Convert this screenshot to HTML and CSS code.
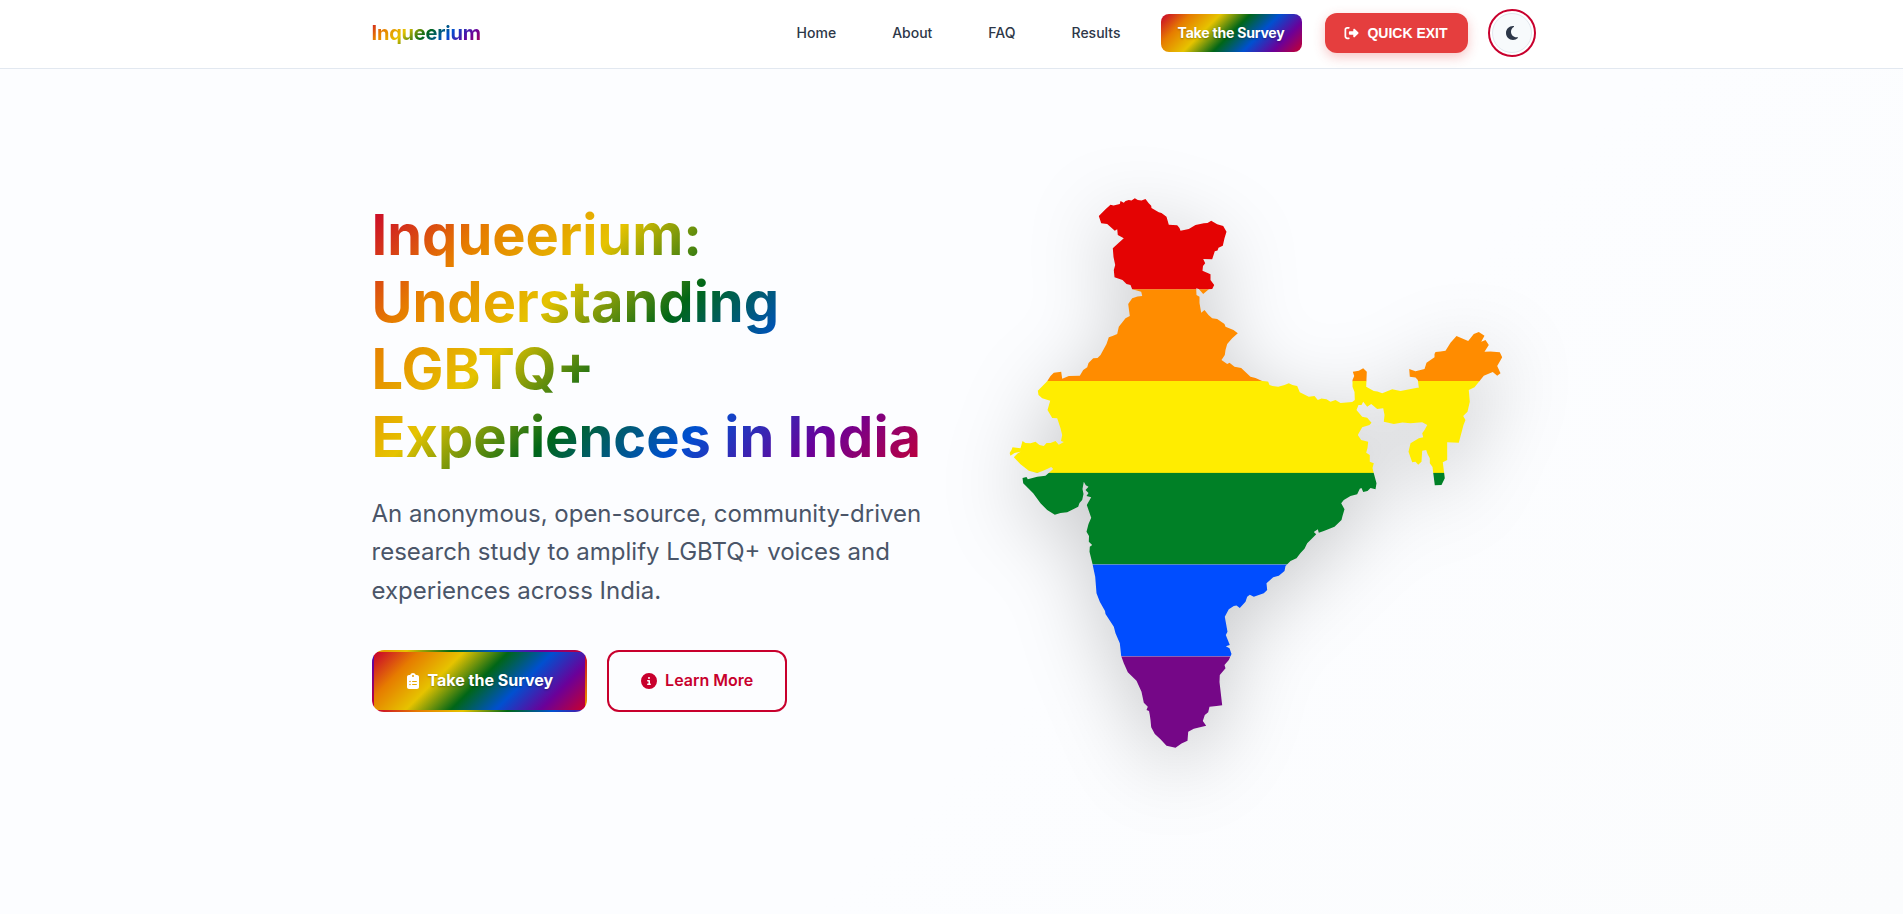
FILE: index.html
```html
<!DOCTYPE html>
<html lang="en">
<head>
<meta charset="utf-8">
<title>Inqueerium</title>
<link rel="stylesheet" href="styles.css">
</head>
<body>
<header class="header">
  <nav class="container nav">
    <a class="brand">Inqueerium</a>
    <div class="menu">
      <a class="link">Home</a>
      <a class="link">About</a>
      <a class="link">FAQ</a>
      <a class="link">Results</a>
      <a class="nav-survey">Take the Survey</a>
      <button class="exit">
        <svg class="exit-icon" viewBox="0 0 512 512"><path d="M377.900 105.900L500.700 228.700c7.200 7.200 11.300 17.100 11.300 27.300s-4.100 20.100-11.300 27.300L377.900 406.100c-6.400 6.400-15 9.900-24 9.900c-18.700 0-33.900-15.200-33.900-33.900l0-62.100-128 0c-17.700 0-32-14.300-32-32l0-64c0-17.700 14.300-32 32-32l128 0 0-62.100c0-18.700 15.200-33.900 33.900-33.900c9 0 17.600 3.600 24 9.900zM160 96L96 96c-17.700 0-32 14.300-32 32l0 256c0 17.700 14.300 32 32 32l64 0c17.700 0 32 14.300 32 32s-14.300 32-32 32l-64 0c-53 0-96-43-96-96L0 128C0 75 43 32 96 32l64 0c17.700 0 32 14.300 32 32s-14.300 32-32 32z"/></svg>
        <span>QUICK EXIT</span>
      </button>
      <button class="theme" aria-label="Toggle theme">
        <svg class="moon" viewBox="0 0 384 512"><path d="M223.500 32C100 32 0 132.300 0 256S100 480 223.500 480c60.600 0 115.500-24.200 155.800-63.400c5-4.900 6.300-12.500 3.100-18.700s-10.100-9.700-17-8.500c-9.800 1.700-19.800 2.600-30.100 2.600c-96.900 0-175.500-78.800-175.500-176c0-65.800 36-123.100 89.300-153.300c6.100-3.500 9.200-10.500 7.700-17.300s-7.300-11.900-14.300-12.500c-6.300-.5-12.600-.8-19-.8z"/></svg>
      </button>
    </div>
  </nav>
</header>
<main class="hero">
  <div class="container grid">
    <section class="copy">
      <h1 class="title">Inqueerium: Understanding LGBTQ+ Experiences in India</h1>
      <p class="lead">An anonymous, open-source, community-driven research study to amplify LGBTQ+ voices and experiences across India.</p>
      <div class="actions">
        <a class="btn btn-primary">
          <svg class="clipboard" viewBox="0 0 384 512"><path fill-rule="evenodd" d="M192 0c-41.800 0-77.400 26.700-90.500 64L64 64C28.700 64 0 92.700 0 128L0 448c0 35.300 28.700 64 64 64l256 0c35.300 0 64-28.700 64-64l0-320c0-35.300-28.700-64-64-64l-37.500 0C269.400 26.700 233.800 0 192 0zm0 64a32 32 0 1 1 0 64 32 32 0 1 1 0-64zM72 272a24 24 0 1 1 48 0 24 24 0 1 1-48 0zm104-16l128 0c8.800 0 16 7.200 16 16s-7.200 16-16 16l-128 0c-8.800 0-16-7.200-16-16s7.200-16 16-16zM72 368a24 24 0 1 1 48 0 24 24 0 1 1-48 0zm88 0c0-8.800 7.200-16 16-16l128 0c8.800 0 16 7.200 16 16s-7.200 16-16 16l-128 0c-8.800 0-16-7.200-16-16z"/></svg>
          <span>Take the Survey</span>
        </a>
        <a class="btn btn-outline">
          <svg class="info" viewBox="0 0 512 512"><path fill-rule="evenodd" d="M256 512A256 256 0 1 0 256 0a256 256 0 1 0 0 512zM216 336l24 0 0-64-24 0c-13.300 0-24-10.700-24-24s10.700-24 24-24l48 0c13.300 0 24 10.700 24 24l0 88 8 0c13.300 0 24 10.700 24 24s-10.700 24-24 24l-80 0c-13.300 0-24-10.700-24-24s10.700-24 24-24zm40-208a32 32 0 1 1 0 64 32 32 0 1 1 0-64z"/></svg>
          <span>Learn More</span>
        </a>
      </div>
    </section>
    <svg class="map" viewBox="975.5 198 556 550" role="img" aria-label="Map of India in rainbow stripes">
      <clipPath id="india"><path d="M1098.300 216L1105 209.300 1110 204.700 1113 205.500 1119.300 204 1120 201 1123.300 202.700 1125 201 1128.300 200 1131 200.500 1134.300 198.300 1137.300 200 1141 200.500 1145 199 1148 203 1150.700 205.700 1151 208 1158.300 212.300 1161 213 1166 216.700 1168.300 224.700 1176.700 225.300 1179 228 1180 230.700 1188.300 229 1195 225 1203.300 223.300 1207 223 1210.700 220.700 1216.700 224.300 1222.700 226 1226 231.700 1224 238.300 1222.300 245.700 1218 247.700 1217 250.500 1214.300 251.300 1211.700 259.300 1202.700 259 1204.700 263.300 1202.500 266 1202 270.700 1210 274.300 1210 280 1213.700 285 1211.700 289 1208.300 289.300 1202.700 294 1198.300 289 1195.700 288.300 1196 295 1199 296.700 1199 303 1200.700 312.700 1204 310 1208 315 1211.700 318.300 1216.700 319 1224 324 1225 326.700 1233 330 1237.300 333.300 1231.700 338.300 1226.700 344 1225 350 1224.300 355 1221 360 1226.700 364 1229 362.700 1234 366.700 1240.700 368 1250 376.700 1255 378 1261.700 381 1267.700 381.700 1269 385 1272 386 1277.700 386.700 1284 385 1288.300 383.300 1292 385 1296.700 386 1299.300 392.300 1308.300 396.700 1314 396 1317.300 400 1321 398.500 1326 399.300 1330 401.700 1335 400 1340 403 1351.700 402 1354.300 400 1354 392 1352 386.700 1352 380 1353.700 376 1352.300 371.700 1358.300 370.700 1362.700 368.300 1366.300 371.700 1365.700 386.700 1373.300 391 1377 391.500 1381.700 393.300 1391.700 389.300 1400 391 1416.700 387.700 1418.300 387.700 1417.300 380 1415 377.500 1409.300 376.700 1408.700 369 1415 371.300 1424 369 1426 362.700 1434 357.300 1434 354 1435 352 1440 351.500 1445 350.700 1450 342.700 1456 336 1467.700 341 1473.300 334 1478.300 332 1484 335.700 1480.700 341.700 1485 340 1488.300 345 1484 351.700 1490 351.500 1499.300 352.300 1501.700 357.300 1499 362 1496.700 366 1500 373.300 1496.700 375.700 1492.300 372 1483.300 375.700 1479.300 380.700 1474 387.300 1468.300 390 1469.300 401.700 1467 411.700 1462.700 416 1465 420 1463 425 1461.700 430 1458.300 442.700 1446.700 442.300 1446.700 460 1442.300 462.300 1444.300 478.300 1441 485 1434.300 485.300 1432.700 472.700 1432 467 1429.300 463.300 1429.300 458.300 1427 454 1425.700 450 1421.700 450.700 1421 461.700 1417.700 464.700 1415 461.700 1411.700 462.300 1408 451.700 1410 443.300 1418.300 438.300 1422.700 437.300 1421.700 433.300 1424 430 1426.700 425 1421.700 422.300 1410 423.300 1402 422.500 1393.300 424 1383.300 421.700 1384 415 1382.700 408.300 1376.700 409 1370.700 404 1366.700 406.700 1362.700 401.700 1361 405 1358 405 1356 410 1361.700 416.700 1366.700 417.700 1371 422.700 1369 425 1361.700 427.300 1357.300 435 1360.700 440 1367.700 441.700 1367 448 1365.700 452.700 1369.300 455 1369.300 461.700 1373.300 463.300 1372 468 1373.300 473.300 1376 483.300 1375 489.300 1370 488 1367 491 1362.700 492 1361 488 1359.300 488.700 1356.700 494.300 1350 496 1343.300 500 1340.700 503.300 1344 509.300 1342 516 1341 520 1334 526.700 1323.300 531 1318.300 532.700 1317.300 529.300 1313.300 532 1315.700 534.300 1311 539 1306.700 543.300 1304 548.700 1300 553 1296 558.300 1290 561 1285 566 1284 571 1278.300 575.700 1272.700 577.300 1266 583.300 1266.700 590 1263.300 593.300 1253.300 596.700 1249.300 594.700 1246.700 596.700 1245 601.700 1239.300 608 1236 605.500 1233.300 606 1228.300 609.300 1224.300 616.700 1227 631.700 1225.300 635 1229.300 645 1225.300 646.300 1229 648.300 1231 654 1228.300 660 1224 665 1225 668.300 1219.300 675 1219 682 1220.300 693.300 1221.700 705.300 1216 706 1209 706.700 1207.700 712.300 1204.300 715 1202.300 721 1205.700 725.700 1193.300 728.700 1187.700 731.700 1187 740.700 1181 743.500 1175 747.700 1166 745.700 1160 739.300 1154.300 734 1150.700 727.300 1150 720 1149.300 715 1148.500 711 1146 710 1147.300 706.700 1143.300 702.700 1141 691.700 1136 680.700 1127.300 672.300 1123.300 663.300 1120.700 656 1119.300 643.300 1115 633.300 1113.300 626.700 1105 614 1104.500 611 1099.300 601.700 1096 593.300 1094.700 576.700 1092 564 1089 551.700 1089.300 546.700 1091.700 545 1088.300 541.700 1088.500 536 1086 531.700 1088 524 1090.700 517.700 1088 510 1086.300 505 1090.700 497.300 1086 496 1088 493 1085 490 1088 486.700 1085.300 485.300 1083.300 481.700 1082 489 1083 494 1081.700 500 1079 503 1077.700 506.700 1066.700 512.300 1060 513 1054.300 514.700 1046.700 510 1040 503.300 1032.700 493.300 1022.700 483.300 1022 478 1026 477 1027.300 479.300 1036.700 476.700 1045 475.700 1052.700 469 1050.700 467 1046.700 469 1042 471 1036.700 473 1028.300 470.700 1020 464.300 1013.300 457.300 1017 453.500 1020 451.700 1014 453 1010 455.700 1009 453 1011 450 1012 447.300 1020 448.300 1022 441 1025 443 1030 443.300 1035 441.700 1039 445 1043.300 446 1046 443 1050 443 1055 441 1058.300 444.700 1063.300 442 1060.500 441 1061.700 435 1060 428.300 1056.700 418.300 1051.700 418 1047 410 1049.700 400.700 1041.700 398.300 1038 395 1037.300 390.700 1046.700 381.300 1050 376 1053.300 372.700 1060.700 371.700 1061.700 378.700 1068.300 376 1079.300 375.700 1082.700 370 1086.700 367.300 1088 363 1092.700 358.300 1097 358 1100 355 1106 344 1108.300 337.300 1112 336 1116.700 334 1118.300 326.700 1125 318.300 1129.300 316 1127.700 304 1131.700 298.300 1137 296.500 1141.700 296 1140.700 291.700 1131.700 289.300 1130 285 1126 284 1122 280 1114 277.300 1113.300 270 1114.700 265 1113 257 1112.300 248.300 1118 243 1123.300 238.300 1117.300 235 1116.700 229.300 1114.300 230.700 1106.700 224 1100.700 223.300z"/></clipPath>
      <g clip-path="url(#india)">
        <rect class="red" x="975" y="197" width="557" height="92.400"/>
        <rect class="orange" x="975" y="289.330" width="557" height="92"/>
        <rect class="yellow" x="975" y="381" width="557" height="92"/>
        <rect class="green" x="975" y="472.900" width="557" height="91.430"/>
        <rect class="blue" x="975" y="564.600" width="557" height="91.600"/>
        <rect class="purple" x="975" y="656.500" width="557" height="92"/>
      </g>
    </svg>
  </div>
</main>
</body>
</html>
```
FILE: styles.css
```css
:root {
  --pride: linear-gradient(135deg, #c8002d, #e67c00, #e6c300, #006617, #0050d0, #6b0099, #c8002d);
  --accent: #c8002d;
}
* { box-sizing: border-box; margin: 0; padding: 0; }
body {
  font-family: Inter, "Liberation Sans", sans-serif;
  line-height: 1.6;
  color: #2d3748;
  background: #fcfdff;
  overflow: hidden;
}
.container { width: 1200px; margin: 0 auto; padding: 0 20px; }
.header { height: 69px; background: #fff; border-bottom: 1px solid #e2e8f0; }
.nav { height: 66px; display: flex; align-items: center; justify-content: space-between; }
.brand {
  font-size: 20px;
  font-weight: 700;
  letter-spacing: -0.2px;
  background: var(--pride);
  background-clip: text;
  color: transparent;
}
.menu { display: flex; align-items: center; }
.link { font-size: 14px; font-weight: 500; margin-right: 56px; }
.link:nth-child(4) { margin-right: 40px; }
.nav-survey {
  height: 38px;
  width: 141px;
  display: flex;
  align-items: center;
  justify-content: center;
  border-radius: 8px;
  background: var(--pride);
  color: #fff;
  font-size: 14px;
  font-weight: 700;
  letter-spacing: -0.2px;
  text-shadow: 0 1px 2px rgba(0, 0, 0, .3);
}
.exit {
  width: 143px;
  height: 40px;
  margin: 0 24px 0 23px;
  display: flex;
  align-items: center;
  justify-content: center;
  gap: 8px;
  border: 0;
  border-radius: 12px;
  background: #e53e3e;
  box-shadow: 0 4px 12px rgba(229, 62, 62, .3);
  color: #fff;
  font: 700 14px "Liberation Sans", sans-serif;
}
.exit-icon { width: 15px; height: 14px; fill: currentColor; }
.theme {
  width: 40px;
  height: 40px;
  display: flex;
  align-items: center;
  justify-content: center;
  border: 1px solid #e2e8f0;
  border-radius: 50%;
  background: #f7fafc;
  outline: 2px solid var(--accent);
  outline-offset: 2px;
}
.moon { width: 14px; height: 16px; fill: #2d3748; }
.hero { height: 845px; background: linear-gradient(135deg, #fcfdff, #fcfdff 60%, #fbfcfd); }
.grid {
  display: grid;
  grid-template-columns: 1fr 1fr;
  gap: 48px;
  align-items: start;
  padding-top: 129px;
}
.copy { padding-top: 4px; }
.title {
  font-size: 56px;
  font-weight: 700;
  line-height: 1.2;
  margin-bottom: 24px;
  background: var(--pride);
  background-clip: text;
  color: transparent;
}
.lead { font-size: 24px; color: #4a5568; margin-bottom: 40px; }
.actions { display: flex; gap: 20px; }
.btn {
  display: flex;
  align-items: center;
  gap: 8px;
  padding: 16px 32px;
  border: 2px solid transparent;
  border-radius: 12px;
  font-size: 16px;
  font-weight: 600;
}
.btn-primary {
  background: var(--pride);
  color: #fff;
  font-weight: 700;
  text-shadow: 0 1px 2px rgba(0, 0, 0, .3);
}
.btn-outline { border-color: var(--accent); color: var(--accent); }
.clipboard { width: 14px; height: 16px; fill: currentColor; }
.info { width: 16px; height: 16px; fill: currentColor; }
.map {
  width: 556px;
  height: 550px;
  overflow: visible;
  filter: drop-shadow(0 20px 40px rgba(0, 0, 0, .2));
}
.red { fill: #e40303; }
.orange { fill: #ff8c00; }
.yellow { fill: #ffed00; }
.green { fill: #008026; }
.blue { fill: #004dff; }
.purple { fill: #750787; }
```
